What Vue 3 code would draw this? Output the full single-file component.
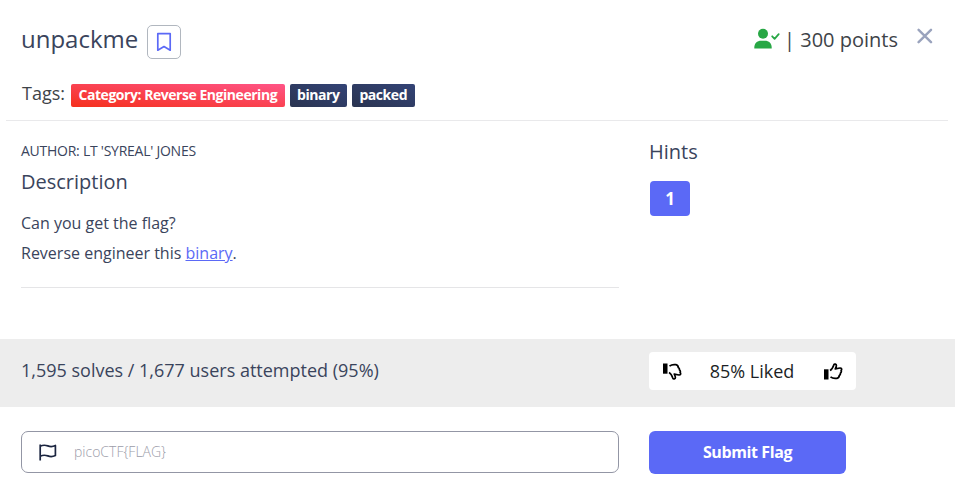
<script setup>
import { ref } from 'vue'

const tags = [
  { label: 'Category: Reverse Engineering', kind: 'danger' },
  { label: 'binary', kind: 'navy' },
  { label: 'packed', kind: 'navy' },
]
const flag = ref('')
</script>

<template>
  <main class="challenge">
    <header class="head">
      <div class="title-row">
        <h1>unpackme</h1>
        <button class="bookmark" aria-label="Bookmark">
          <svg width="16" height="20" viewBox="0 0 16 20" fill="none" stroke="#5b69f6" stroke-width="1.7" stroke-linejoin="round">
            <path d="M1.8 1.7h12.4v16.5L8 14.6l-6.2 3.6z" />
          </svg>
        </button>
        <div class="points">
          <svg class="user" width="26" height="22" viewBox="0 0 26 22">
            <circle cx="9" cy="5.8" r="5" fill="#28a745" />
            <path d="M.3 20.5v-1.1c0-4 2.8-6.7 6.8-6.7h3.8c4 0 6.8 2.700 6.800 6.700v1.100z" fill="#28a745" />
            <path d="M18.200 8.300l2.400 2.500 4.100-4.600" fill="none" stroke="#28a745" stroke-width="1.800" stroke-linecap="round" stroke-linejoin="round" />
          </svg>
          <span class="points-text">| 300 points</span>
        </div>
        <button class="close" aria-label="Close">
          <svg width="16" height="16" viewBox="0 0 16 16" fill="none" stroke="#9aa3bd" stroke-width="2.4" stroke-linecap="round">
            <path d="M1.600 1.800l12.400 12.400M14 1.800L1.600 14.200" />
          </svg>
        </button>
      </div>
      <div class="tags">
        <span class="tags-label">Tags:</span>
        <span v-for="tag in tags" :key="tag.label" class="tag" :class="tag.kind">{{ tag.label }}</span>
      </div>
    </header>

    <section class="columns body">
      <div class="description">
        <p class="author">AUTHOR: LT 'SYREAL' JONES</p>
        <h2>Description</h2>
        <p class="line first">Can you get the flag?</p>
        <p class="line second">Reverse engineer this <a href="#">binary</a>.</p>
      </div>
      <aside>
        <h2 class="hints-title">Hints</h2>
        <button class="hint">1</button>
      </aside>
    </section>

    <section class="columns stats">
      <p class="solves">1,595 solves / 1,677 users attempted (95%)</p>
      <div class="rating">
        <svg width="19" height="17" viewBox="0 0 19 17">
          <g transform="translate(0 17) scale(1 -1)">
            <path d="M0 6.300h4.500v10.200H0z" fill="#000" />
            <path d="M6 7.500C8.300 6.300 9 4.300 9.800 1.900c.6-1.500 2.600-.9 2.600.6 0 1.200-.6 2.300-1.100 3.400l4.700-.9c1.700-.1 2.100 1.500 1.100 2.500.5 1 .1 2-.7 2.600.2 1-.3 1.900-1.100 2.300-.1 1.600-.9 2.600-2.400 2.900-2.500.4-4.600 0-6.400-1.400" fill="none" stroke="#000" stroke-width="1.700" stroke-linejoin="round" />
          </g>
        </svg>
        <span class="liked">85% Liked</span>
        <svg width="19" height="17" viewBox="0 0 19 17">
          <path d="M0 6.300h4.500v10.200H0z" fill="#000" />
          <path d="M6 7.500C8.300 6.300 9 4.300 9.800 1.900c.6-1.500 2.600-.9 2.600.6 0 1.200-.6 2.300-1.100 3.400l4.700-.9c1.700-.1 2.100 1.500 1.100 2.500.5 1 .1 2-.7 2.600.2 1-.3 1.900-1.100 2.300-.1 1.600-.9 2.600-2.400 2.900-2.500.4-4.600 0-6.400-1.400" fill="none" stroke="#000" stroke-width="1.700" stroke-linejoin="round" />
        </svg>
      </div>
    </section>

    <form class="columns submit" @submit.prevent>
      <label class="field">
        <svg class="flag-icon" width="18" height="17" viewBox="0 0 18 17" fill="none" stroke="#1b2540" stroke-width="1.700" stroke-linejoin="round">
          <path d="M1.200 .6v16M1.200 2.200c3-1.400 5.200-1.200 7.600-.3s4.700 1 7.600-.4v10c-2.900 1.400-5.200 1.300-7.600.4s-4.600-1.100-7.600.3" />
        </svg>
        <input v-model="flag" placeholder="picoCTF{FLAG}" aria-label="Flag" />
      </label>
      <button class="send">Submit Flag</button>
    </form>
  </main>
</template>

<style>
body {
  background: #fff;
}
</style>

<style scoped>
* {
  box-sizing: border-box;
}
.challenge {
  width: 955px;
  height: 495px;
  overflow: hidden;
  font-family: 'Open Sans', sans-serif;
  color: #3a445c;
}
h1,
h2,
p {
  margin: 0;
  font-weight: 400;
}
button {
  border: 0;
  padding: 0;
  font-family: inherit;
  background: none;
}
svg {
  display: block;
  flex: none;
}
.head {
  height: 121px;
  margin: 0 7px 0 6px;
  padding-left: 15px;
  border-bottom: 1px solid #e9e9eb;
}
.title-row {
  display: flex;
  align-items: flex-start;
  height: 82px;
  padding-top: 23px;
}
h1 {
  width: 126px;
  font-size: 24px;
  line-height: 32px;
}
.bookmark {
  display: flex;
  align-items: center;
  justify-content: center;
  width: 34px;
  height: 34px;
  margin-top: 2px;
  border: 1px solid #b1b7bf;
  border-radius: 5px;
}
.points {
  display: flex;
  margin-left: auto;
  padding-top: 5px;
  color: #3e4348;
}
.points-text {
  margin-left: 4px;
  font-size: 20px;
  line-height: 24px;
}
.close {
  margin: 5px 15px 0 19px;
}
.tags {
  display: flex;
  height: 25px;
  gap: 5px;
}
.tags-label {
  width: 45px;
  padding-left: 1px;
  font-size: 18px;
  line-height: 22px;
  color: #3e4348;
}
.tag {
  height: 23px;
  margin-top: 2px;
  padding: 0 7.500px;
  border-radius: 2px;
  font-size: 14px;
  font-weight: 700;
  letter-spacing: -0.460px;
  line-height: 21px;
  color: #fff;
  white-space: nowrap;
}
.danger {
  background: linear-gradient(to top right, #f5301c, #ff5487);
}
.navy {
  background: linear-gradient(to top right, #2a3450, #334376);
}
.columns {
  display: grid;
  grid-template-columns: 598px 1fr;
  column-gap: 30px;
  padding-left: 21px;
}
.body {
  height: 218px;
}
.description {
  height: 167px;
  padding-top: 20px;
  border-bottom: 1px solid #e5e5e7;
}
.author {
  font-size: 14px;
  letter-spacing: -0.250px;
  line-height: 20px;
}
h2 {
  font-size: 20px;
  line-height: 30px;
}
.description h2 {
  margin-top: 6px;
}
.line {
  font-size: 16px;
  line-height: 30px;
}
.first {
  margin-top: 11px;
}
.line a {
  color: #5b69f6;
}
.hints-title {
  margin-top: 16px;
}
.hint {
  display: block;
  width: 40px;
  height: 35px;
  margin: 14px 0 0 1px;
  border-radius: 4px;
  background: #5b69f6;
  color: #fff;
  font-size: 17px;
  font-weight: 700;
}
.stats {
  height: 68px;
  align-items: center;
  background: #ededed;
}
.solves {
  font-size: 18px;
  line-height: 26px;
  margin-top: -7px;
}
.rating {
  display: flex;
  align-items: center;
  justify-content: space-between;
  width: 207px;
  height: 38px;
  margin-top: -4px;
  padding: 0 13px 0 14px;
  border-radius: 4px;
  background: #fff;
  color: #1c1f26;
}
.liked {
  margin-right: 2px;
  font-size: 18px;
}
.submit {
  padding-top: 24px;
}
.field {
  display: flex;
  align-items: center;
  height: 42px;
  padding: 0 0 1px 17px;
  border: 1px solid #9396a5;
  border-radius: 7px;
}
.flag-icon {
  margin-top: 1px;
}
input {
  flex: 1;
  margin-left: 17px;
  padding: 0 0 1px;
  border: 0;
  outline: 0;
  background: none;
  font-family: inherit;
  font-size: 14px;
  font-weight: 300;
}
input::placeholder {
  color: #9b9ca9;
  opacity: 1;
}
.send {
  width: 197px;
  height: 43px;
  padding-bottom: 2px;
  border-radius: 6px;
  background: #5b69f6;
  color: #fff;
  font-size: 16px;
  font-weight: 700;
  letter-spacing: -0.400px;
}
</style>
